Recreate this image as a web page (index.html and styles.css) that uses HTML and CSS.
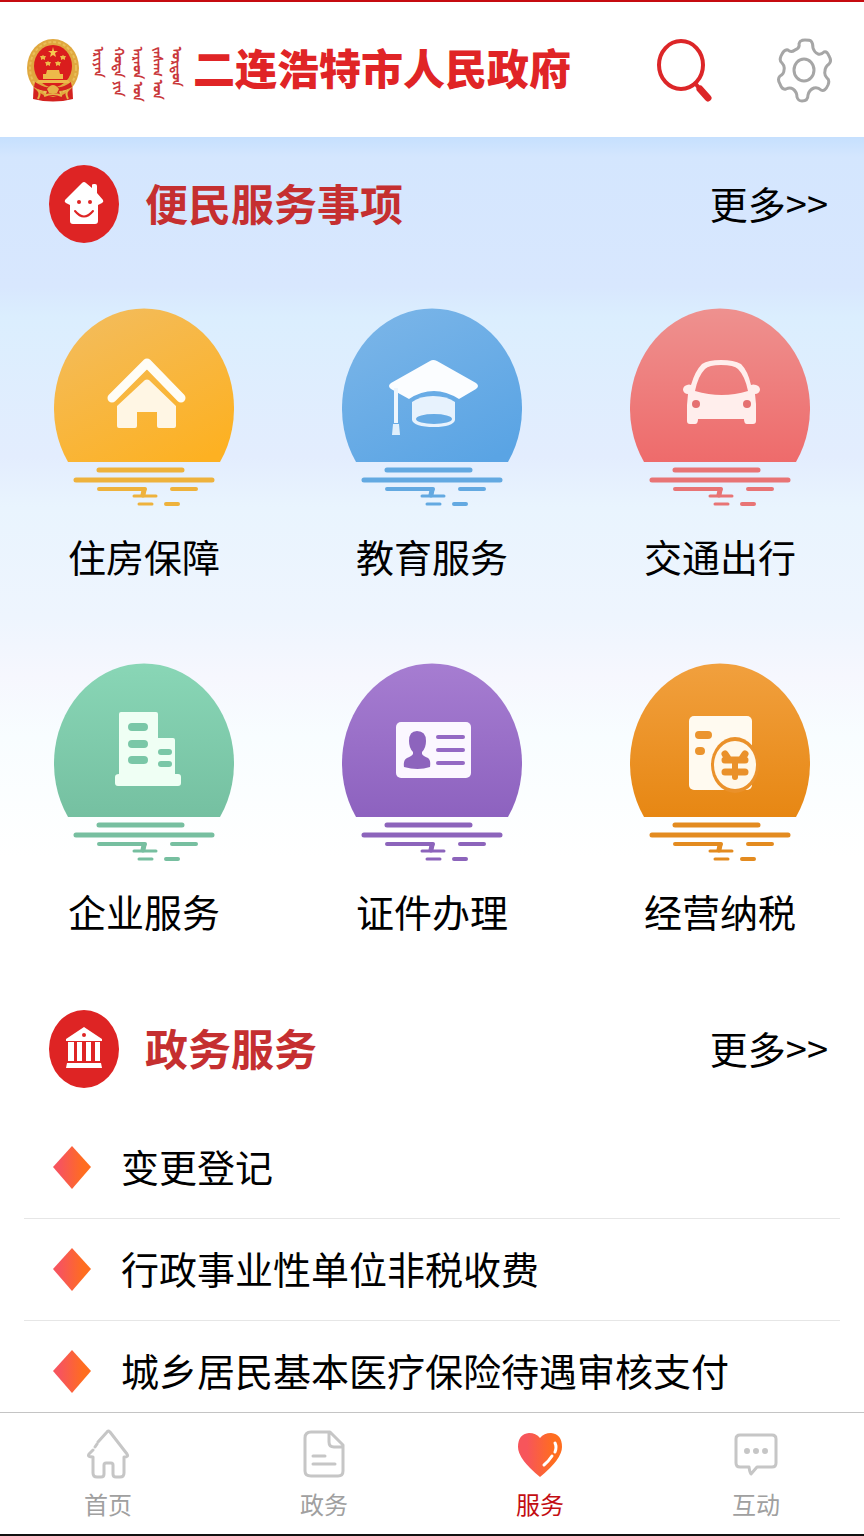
FILE: index.html
```html
<!DOCTYPE html>
<html lang="zh-CN">
<head>
	<title>二连浩特市人民政府</title>
	<meta charset="utf-8">
	<meta name="viewport" content="width=device-width, initial-scale=1.0">
	<link rel="stylesheet" href="styles.css">
</head>
<body>

<header class="header">
	<svg class="emblem" viewBox="0 0 52 64" aria-hidden="true">
		<path d="M7 42 L6 61 Q26 66 46 61 L45 42Z" fill="#d3221f"/>
		<ellipse cx="26" cy="30" rx="26" ry="29" fill="#e0a83f"/>
		<ellipse cx="26" cy="30" rx="23" ry="26" fill="none" stroke="#eabf59" stroke-width="2" stroke-dasharray="3 2"/>
		<ellipse cx="26" cy="28" rx="19" ry="21" fill="#da1d1d"/>
		<path d="M26 9l1 4h4l-3 2 1 4-3-2-3 2 1-4-3-2h4z" fill="#f5c94f"/>
		<path d="M16 17l1 1h2l-1 2v2l-2-1-2 1v-2l-1-2h2zM36 17l1 1h2l-1 2v2l-2-1-2 1v-2l-1-2h2zM21 23l1 1h2l-1 2v2l-2-1-2 1v-2l-1-2h2zM31 23l1 1h2l-1 2v2l-2-1-2 1v-2l-1-2h2z" fill="#edb94a"/>
		<path d="M20 32h12l1 4h3v5h-20v-5h3zM11 42h30l2 3h-34z" fill="#edb94a"/>
		<path d="M8 44 Q17 50 21 49 Q26 44 31 49 Q36 50 44 44 L45 49 Q38 53 32 53 L34 60 L26 58 L18 60 L20 53 Q13 53 7 49Z" fill="#d3221f"/>
		<path d="M20 51 Q26 43 32 51 L30 55 H22Z" fill="#e6b247"/>
		<path d="M11 52 Q14 55 11 61M41 52 Q38 55 41 61M17 58 Q26 54 35 58" fill="none" stroke="#e6b247" stroke-width="2"/>
	</svg>
	<div class="mongol" lang="mn-Mong">
		<span>ᠡᠷᠢᠶᠡᠨ</span>
		<span>ᠬᠣᠲᠠ ᠶᠢᠨ</span>
		<span>ᠠᠷᠠᠳ ᠤᠨ</span>
		<span>ᠵᠠᠰᠠᠭ ᠤᠨ</span>
		<span>ᠣᠷᠳᠣᠨ</span>
	</div>
	<h1 class="site-name">二连浩特市人民政府</h1>
	<div class="header-tools">
		<button type="button" aria-label="搜索">
			<svg width="56" height="68" viewBox="0 0 56 68">
				<ellipse cx="25" cy="29" rx="22" ry="24" fill="none" stroke="#dc2628" stroke-width="4"/>
				<path d="M39 47l4 5" stroke="#dc2628" stroke-width="4"/>
				<path d="M44 53l8 9" stroke="#dc2628" stroke-width="7" stroke-linecap="round"/>
			</svg>
		</button>
		<button type="button" aria-label="设置">
			<svg width="56" height="68" viewBox="0 0 56 68" fill="none" stroke="#a6a6a6" stroke-width="3" stroke-linejoin="round">
				<path d="M25 5Q26 4 29 4Q34 4 35 5Q37 7 37 12Q38 16 42 18Q45 19 48 16Q51 15 53 20Q56 25 53 28Q49 31 49 35Q48 39 51 42Q54 44 52 49Q49 56 45 54Q42 51 38 52Q33 54 32 59Q32 65 26 65Q22 65 21 61Q21 56 17 53Q14 51 10 53Q6 54 4 48Q1 43 4 40Q8 38 8 34Q9 30 6 27Q3 25 5 20Q8 13 12 14Q15 17 19 14Q24 12 23 8Q24 5 25 5Z"/>
				<ellipse cx="28" cy="34" rx="10" ry="11"/>
			</svg>
		</button>
	</div>
</header>

<main class="main">
	<section>
		<div class="section-head">
			<svg class="section-icon" viewBox="0 0 70 79" aria-hidden="true">
				<ellipse cx="35" cy="39" rx="35" ry="39" fill="#de2424"/>
				<path d="M33 18Q35 16 37 18L43 23V20Q43 19 45 19H46Q48 19 48 21V28L54 35Q55 37 53 38L49 40V56Q49 59 46 59H24Q21 59 21 56V40L17 38Q15 37 16 35Z" fill="#fff"/>
				<circle cx="30" cy="37" r="2" fill="#de2424"/>
				<circle cx="41" cy="37" r="2" fill="#de2424"/>
				<path d="M26 46Q35 57 44 46" fill="none" stroke="#de2424" stroke-width="2" stroke-linecap="round"/>
			</svg>
			<h2>便民服务事项</h2>
			<a class="more" href="#">更多&gt;&gt;</a>
		</div>

		<svg class="defs" aria-hidden="true">
			<defs>
				<linearGradient id="yellow" x1="0.2" y1="0" x2="0.8" y2="1"><stop offset="0" stop-color="#f3bc5c"/><stop offset="1" stop-color="#fdb122"/></linearGradient>
				<linearGradient id="blue" x1="0.2" y1="0" x2="0.8" y2="1"><stop offset="0" stop-color="#7ab5e8"/><stop offset="1" stop-color="#5aa4e4"/></linearGradient>
				<linearGradient id="red" x2="0" y2="1"><stop offset="0" stop-color="#ee918f"/><stop offset="1" stop-color="#ee6b6b"/></linearGradient>
				<linearGradient id="green" x2="0" y2="1"><stop offset="0" stop-color="#89d6b6"/><stop offset="1" stop-color="#75c0a1"/></linearGradient>
				<linearGradient id="purple" x2="0" y2="1"><stop offset="0" stop-color="#a67dd1"/><stop offset="1" stop-color="#8d62bf"/></linearGradient>
				<linearGradient id="orange" x2="0" y2="1"><stop offset="0" stop-color="#f1a03e"/><stop offset="1" stop-color="#e78713"/></linearGradient>
				<linearGradient id="hot"><stop offset="0.2" stop-color="#f7555b"/><stop offset="0.8" stop-color="#ff6d1f"/></linearGradient>
				<path id="sun" d="M14 154A90 100 0 1 1 166 154Z"/>
				<g id="waves" fill="none" stroke-linecap="round">
					<path d="M45 162H128M22 172H158" stroke-width="5"/>
					<path d="M45 181H91M118 181H142M112 196H124" stroke-width="4"/>
					<path d="M80 188H102M85 196H98" stroke-width="3"/>
					<path d="M90 182L89 187" stroke-width="5"/>
				</g>
			</defs>
		</svg>

		<ul class="services">
			<li><a href="#">
				<svg viewBox="0 0 180 200" aria-hidden="true">
					<use href="#sun" fill="url(#yellow)"/>
					<use href="#waves" stroke="#eeb23c"/>
					<path d="M58 90L93 55L127 90" fill="none" stroke="#fffdf6" stroke-width="9" stroke-linecap="round" stroke-linejoin="round"/>
					<path d="M91 72Q93 71 95 72L122 98V118Q122 120 120 120H105Q103 120 103 118V104H83V118Q83 120 81 120H65Q63 120 63 118V98Z" fill="#fff6e4"/>
				</svg>
				<span>住房保障</span>
			</a></li>
			<li><a href="#">
				<svg viewBox="0 0 180 200" aria-hidden="true">
					<use href="#sun" fill="url(#blue)"/>
					<use href="#waves" stroke="#63a9e1"/>
					<path d="M88 53Q91 51 95 53L134 75Q138 78 134 81L117 91Q104 83 92 83Q79 83 67 91L49 81Q45 78 49 75Z" fill="#fbfdff"/>
					<path d="M70 94Q78 88 91 88Q105 88 113 94V112Q111 119 92 119Q72 119 70 112Z" fill="#e7f2fd"/>
					<ellipse cx="92" cy="111" rx="18" ry="5" fill="#66aae4"/>
					<path d="M54 80V115" stroke="#eef6fd" stroke-width="4"/>
					<path d="M51 116H57L58 127H50Z" fill="#e0effc"/>
				</svg>
				<span>教育服务</span>
			</a></li>
			<li><a href="#">
				<svg viewBox="0 0 180 200" aria-hidden="true">
					<use href="#sun" fill="url(#red)"/>
					<use href="#waves" stroke="#e87475"/>
					<path d="M61 77Q65 63 72 56Q78 52 91 52Q104 52 111 56Q118 63 121 77Q123 76 126 77Q130 78 130 82Q129 86 125 86L126 96V113Q126 116 123 116H117Q114 116 114 111H68Q68 116 65 116H60Q57 116 57 113V97L58 86Q54 86 53 82Q53 78 57 77Q59 76 61 77ZM65 83Q92 91 118 83Q115 68 108 61Q104 57 91 57Q79 57 75 61Q68 68 65 83Z" fill="#ffeeec" fill-rule="evenodd"/>
					<circle cx="66" cy="96" r="4" fill="#e57171"/>
					<circle cx="117" cy="96" r="4" fill="#e57171"/>
				</svg>
				<span>交通出行</span>
			</a></li>
			<li><a href="#">
				<svg viewBox="0 0 180 200" aria-hidden="true">
					<use href="#sun" fill="url(#green)"/>
					<use href="#waves" stroke="#77bfa0"/>
					<path d="M67 49H102Q104 49 104 51V75H119Q121 75 121 77V111H124Q127 111 127 114V120Q127 123 124 123H64Q61 123 61 120V114Q61 111 65 111V51Q65 49 67 49Z" fill="#effff4"/>
					<path d="M78 64H90M78 81H90M78 97H90" stroke="#7ac7a7" stroke-width="8" stroke-linecap="round"/>
					<path d="M107 89H115M107 101H115" stroke="#7ac7a7" stroke-width="6" stroke-linecap="round"/>
				</svg>
				<span>企业服务</span>
			</a></li>
			<li><a href="#">
				<svg viewBox="0 0 180 200" aria-hidden="true">
					<use href="#sun" fill="url(#purple)"/>
					<use href="#waves" stroke="#8c64bb"/>
					<rect x="54" y="59" width="75" height="56" rx="5" fill="#fbf7ff"/>
					<path d="M75 68Q84 68 84 78Q84 85 80 89V91Q81 93 86 95Q89 97 88 104Q76 108 62 104Q61 97 65 95Q70 93 71 91V89Q67 85 67 78Q67 68 75 68Z" fill="#8d64bd"/>
					<path d="M96 74H121M96 87H121M96 100H121" stroke="#9469c4" stroke-width="4" stroke-linecap="round"/>
				</svg>
				<span>证件办理</span>
			</a></li>
			<li><a href="#">
				<svg viewBox="0 0 180 200" aria-hidden="true">
					<use href="#sun" fill="url(#orange)"/>
					<use href="#waves" stroke="#e38b20"/>
					<rect x="59" y="53" width="63" height="74" rx="5" fill="#fffaf0"/>
					<path d="M69 72H78M69 88H71" stroke="#eb942e" stroke-width="8" stroke-linecap="round"/>
					<ellipse cx="105" cy="102" rx="24" ry="28" fill="#ea912a"/>
					<ellipse cx="105" cy="102" rx="21" ry="24" fill="#fff8ea"/>
					<path d="M95 91L99 97H111L115 91M95 97H115M95 109H115" fill="none" stroke="#ea912a" stroke-width="7" stroke-linecap="round" stroke-linejoin="round"/>
					<path d="M105 97V114" stroke="#ea912a" stroke-width="6" stroke-linecap="round"/>
				</svg>
				<span>经营纳税</span>
			</a></li>
		</ul>
	</section>

	<section>
		<div class="section-head">
			<svg class="section-icon" viewBox="0 0 70 79" aria-hidden="true">
				<ellipse cx="35" cy="39" rx="35" ry="39" fill="#de2424"/>
				<path d="M35 17L53 29V31H17V29ZM19 32H25V51H19ZM28 32H33V51H28ZM37 32H42V51H37ZM46 32H51V51H46ZM18 53H52L53 58H17Z" fill="#fff"/>
				<circle cx="35" cy="25" r="2" fill="#de2424"/>
			</svg>
			<h2>政务服务</h2>
			<a class="more" href="#">更多&gt;&gt;</a>
		</div>
		<ul class="affairs">
			<li><a href="#"><svg viewBox="0 0 38 43" aria-hidden="true"><path d="M19 0L38 21L19 43L0 21Z" fill="url(#hot)"/></svg><span>变更登记</span></a></li>
			<li><a href="#"><svg viewBox="0 0 38 43" aria-hidden="true"><path d="M19 0L38 21L19 43L0 21Z" fill="url(#hot)"/></svg><span>行政事业性单位非税收费</span></a></li>
			<li><a href="#"><svg viewBox="0 0 38 43" aria-hidden="true"><path d="M19 0L38 21L19 43L0 21Z" fill="url(#hot)"/></svg><span>城乡居民基本医疗保险待遇审核支付</span></a></li>
		</ul>
	</section>
</main>

<nav class="tabs">
	<a href="#">
		<svg viewBox="0 0 44 50" aria-hidden="true">
			<path d="M11 15L9 18M12 13L21 3Q22 1 24 3L41 25Q43 28 38 28V44Q38 48 34 48H30Q27 48 27 45V36Q27 34 25 34H20Q18 34 18 36V45Q18 48 15 48H11Q7 48 7 44V28Q1 28 3 25L7 21"/>
		</svg>
		首页
	</a>
	<a href="#">
		<svg viewBox="0 0 44 50" aria-hidden="true">
			<path d="M9 3H28L41 16V42Q41 47 36 47H9Q3 47 3 42V9Q3 3 9 3ZM27 4V13Q27 18 32 18H41M11 27H23M11 35H33"/>
		</svg>
		政务
	</a>
	<a href="#" class="active">
		<svg viewBox="0 0 44 50" aria-hidden="true">
			<path class="heart" d="M22 48Q0 30 0 18Q0 5 11 4Q18 4 22 9Q26 4 33 4Q44 5 44 18Q44 30 22 48Z"/>
			<path class="shine" d="M37 14Q39 18 37 23M34 27Q30 33 26 36"/>
		</svg>
		服务
	</a>
	<a href="#">
		<svg viewBox="0 0 44 50" aria-hidden="true">
			<path d="M6 6H38Q42 6 42 10V34Q42 38 38 38H23L17 45Q16 45 15 38H6Q2 38 2 34V10Q2 6 6 6Z"/>
			<path class="dots" d="M13 22H13M22 22H22M31 22H31"/>
		</svg>
		互动
	</a>
</nav>

</body>
</html>
```
FILE: styles.css
```css
* {
	box-sizing: border-box;
}
body {
	margin: 0;
	height: 100vh;
	display: flex;
	flex-direction: column;
	font-family: "Noto Sans CJK SC", sans-serif;
	font-size: 38px;
	color: #000;
	background: #fff;
	border-top: 2px solid #c60b10;
	border-bottom: 2px solid #111;
}
a {
	color: inherit;
	text-decoration: none;
}
ul {
	margin: 0;
	padding: 0;
	list-style: none;
}
svg {
	display: block;
	flex: none;
}
.defs {
	width: 0;
	height: 0;
}

/* header */
.header {
	flex: none;
	display: flex;
	align-items: center;
	height: 135px;
	padding: 0 32px 0 27px;
}
.emblem {
	width: 52px;
	height: 64px;
}
.mongol {
	display: flex;
	justify-content: space-between;
	width: 94px;
	height: 46px;
	margin: 0 8px 0 12px;
	font-size: 13px;
	line-height: 16px;
	font-weight: 700;
	color: #c9373b;
}
.mongol span {
	writing-mode: vertical-lr;
	white-space: nowrap;
}
.site-name {
	margin: 0;
	padding-bottom: 6px;
	font-size: 42px;
	line-height: 60px;
	font-weight: 900;
	color: #e02426;
	white-space: nowrap;
}
.header-tools {
	display: flex;
	gap: 64px;
	margin-left: auto;
}
.header-tools button {
	padding: 0;
	border: 0;
	background: none;
	cursor: pointer;
}

/* content */
.main {
	flex: 1;
	min-height: 0;
	overflow-y: auto;
	scrollbar-width: none;
	background: linear-gradient(#c6e0fe 0, #d4e6fe 20px, #d8e7fe 150px, #dbeefe 180px, #e3edfe 320px, #e9f4fe 370px, #eef5fe 480px, #f6f7fe 540px, #f8fdff 600px, #fff 720px) no-repeat;
}
.section-head {
	display: flex;
	align-items: center;
	padding: 28px 36px 0 49px;
}
.section-icon {
	width: 70px;
	height: 79px;
}
.section-head h2 {
	margin: 0 0 0 26px;
	padding-bottom: 6px;
	font-size: 43px;
	line-height: 60px;
	font-weight: 700;
	color: #c52f30;
}
.more {
	margin-left: auto;
	padding-bottom: 4px;
}
.services {
	display: grid;
	grid-template-columns: repeat(3, 1fr);
	row-gap: 81px;
	padding: 64px 0 45px;
}
.services a {
	display: flex;
	flex-direction: column;
	align-items: center;
	gap: 22px;
	line-height: 52px;
}
.services svg {
	width: 180px;
	height: 200px;
}
.affairs {
	padding: 28px 24px 0;
}
.affairs li {
	border-bottom: 1px solid #e6e6e6;
}
.affairs a {
	display: flex;
	align-items: center;
	gap: 30px;
	height: 101px;
	padding-left: 29px;
	white-space: nowrap;
}
.affairs span {
	padding-bottom: 4px;
}
.affairs svg {
	width: 38px;
	height: 43px;
}

/* bottom tabs */
.tabs {
	flex: none;
	display: flex;
	border-top: 1px solid #c4c4c4;
	background: #fff;
}
.tabs a {
	flex: 1;
	display: flex;
	flex-direction: column;
	align-items: center;
	gap: 7px;
	padding: 16px 0 12px;
	font-size: 24px;
	line-height: 36px;
	color: #a0a0a0;
}
.tabs svg {
	width: 44px;
	height: 50px;
	fill: none;
	stroke: #c6c6c6;
	stroke-width: 3;
	stroke-linecap: round;
	stroke-linejoin: round;
}
.tabs .active {
	color: #c30d12;
}
.tabs .heart {
	fill: url(#hot);
	stroke: none;
}
.tabs .shine {
	stroke: #fff;
}
.tabs .dots {
	stroke-width: 6;
}
```
